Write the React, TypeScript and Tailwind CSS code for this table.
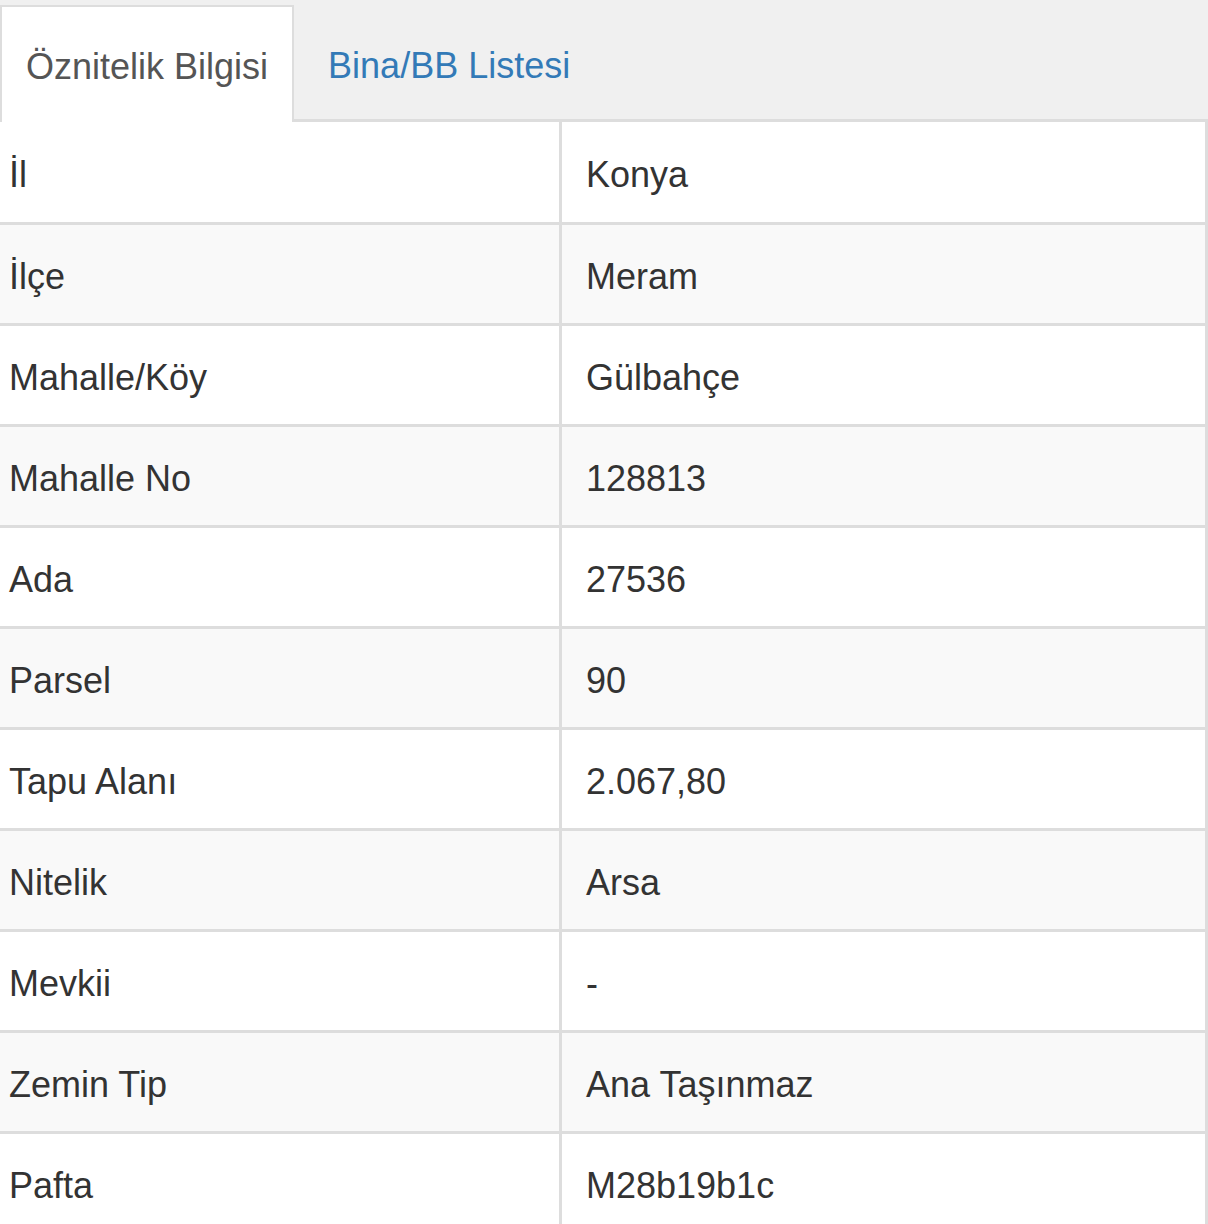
const rows: [string, string][] = [
  ["İl", "Konya"],
  ["İlçe", "Meram"],
  ["Mahalle/Köy", "Gülbahçe"],
  ["Mahalle No", "128813"],
  ["Ada", "27536"],
  ["Parsel", "90"],
  ["Tapu Alanı", "2.067,80"],
  ["Nitelik", "Arsa"],
  ["Mevkii", "-"],
  ["Zemin Tip", "Ana Taşınmaz"],
  ["Pafta", "M28b19b1c"],
];

export default function App() {
  return (
    <div className="w-[1208px] h-[1224px] overflow-hidden bg-white font-['Liberation_Sans',Arial,sans-serif] text-[36px] text-[#333]">
      {/* Tabs */}
      <div className="flex items-end h-[122px] bg-[#f0f0f0] border-b-[3px] border-[#ddd]">
        <div className="flex items-center h-[117px] -mb-[3px] pt-[4px] px-[24px] bg-white border-[#ddd] border-t-2 border-l-2 border-r-2 text-[#555]">
          Öznitelik Bilgisi
        </div>
        <div className="flex items-center h-[114px] pt-[7px] ml-[9px] px-[25px] text-[#337ab7]">
          Bina/BB Listesi
        </div>
      </div>

      {/* Table */}
      <div className="border-r-[3px] border-[#ddd]">
        {rows.map(([label, value], i) => (
          <div
            key={label}
            className={`flex border-b-[3px] border-[#ddd] ${i === 0 ? "h-[103px]" : "h-[101px]"} ${i % 2 === 1 ? "bg-[#f9f9f9]" : "bg-white"}`}
          >
            <div className="flex items-center w-[562px] pt-[5px] pl-[9px] border-r-[3px] border-[#ddd]">
              {label}
            </div>
            <div className="flex items-center flex-1 pt-[5px] pl-[24px]">{value}</div>
          </div>
        ))}
      </div>
    </div>
  );
}
